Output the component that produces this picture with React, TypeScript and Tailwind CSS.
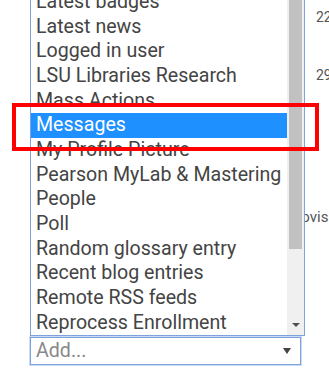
import React from "react";

const items = [
    "Latest badges",
    "Latest news",
    "Logged in user",
    "LSU Libraries Research",
    "Mass Actions",
    "Messages",
    "My Profile Picture",
    "Pearson MyLab & Mastering",
    "People",
    "Poll",
    "Random glossary entry",
    "Recent blog entries",
    "Remote RSS feeds",
    "Reprocess Enrollment",
];

const selected = "Messages";

function ListOption({ label }: { label: string }) {
    const active = label === selected;
    return (
        <div
            className={`h-[24.67px] leading-[24.67px] pl-[5px] whitespace-nowrap overflow-hidden ${
                active ? "bg-[#1e90ff] text-white" : "text-[#444]"
            }`}
        >
            {label}
        </div>
    );
}

export default function App() {
    return (
        <div
            className="relative w-[329px] h-[391px] bg-white overflow-hidden"
            style={{ fontFamily: "Roboto, 'Liberation Sans', sans-serif" }}
        >
            {/* page content behind the open select */}
            <div className="pl-[316px] pt-[9px] text-[14px] text-[#555] leading-[16px] whitespace-nowrap">
                <div>22</div>
                <div className="mt-[42px]">29</div>
            </div>
            <div className="pl-[288px] mt-[126px] text-[15px] text-[#555] leading-[16px] whitespace-nowrap">
                provisional
            </div>

            {/* open dropdown list */}
            <div className="absolute left-[30px] top-[-11px] w-[275px] flex flex-col text-[19.6px]">
                <div className="flex border border-[#7ea2dc] bg-white h-[347px]">
                    <div className="flex-1 min-w-0">
                        {items.map((it) => (
                            <ListOption key={it} label={it} />
                        ))}
                    </div>
                    <div className="w-[17px] bg-[#f0f0f0] flex flex-col items-center">
                        <div className="w-[13px] h-[259px] bg-[#c1c1c1]" />
                        <div className="flex-1" />
                        <div className="mb-[8px] w-0 h-0 border-l-[4px] border-r-[4px] border-t-[4px] border-l-transparent border-r-transparent border-t-[#505050]" />
                    </div>
                </div>
                <div className="flex items-center w-[271px] h-[28px] border border-[#7ea2dc] shadow-[0_0_0_1px_#c9dbf5] bg-white mt-[1px]">
                    <span className="pl-[5px] text-[#888] flex-1">Add...</span>
                    <span className="mr-[9px] w-0 h-0 border-l-[4px] border-r-[4px] border-t-[6px] border-l-transparent border-r-transparent border-t-[#444]" />
                </div>
            </div>

            {/* highlight annotation */}
            <div className="absolute left-[12px] top-[103px] w-[307px] h-[48px] border-[4px] border-[#ff0000]" />
        </div>
    );
}
